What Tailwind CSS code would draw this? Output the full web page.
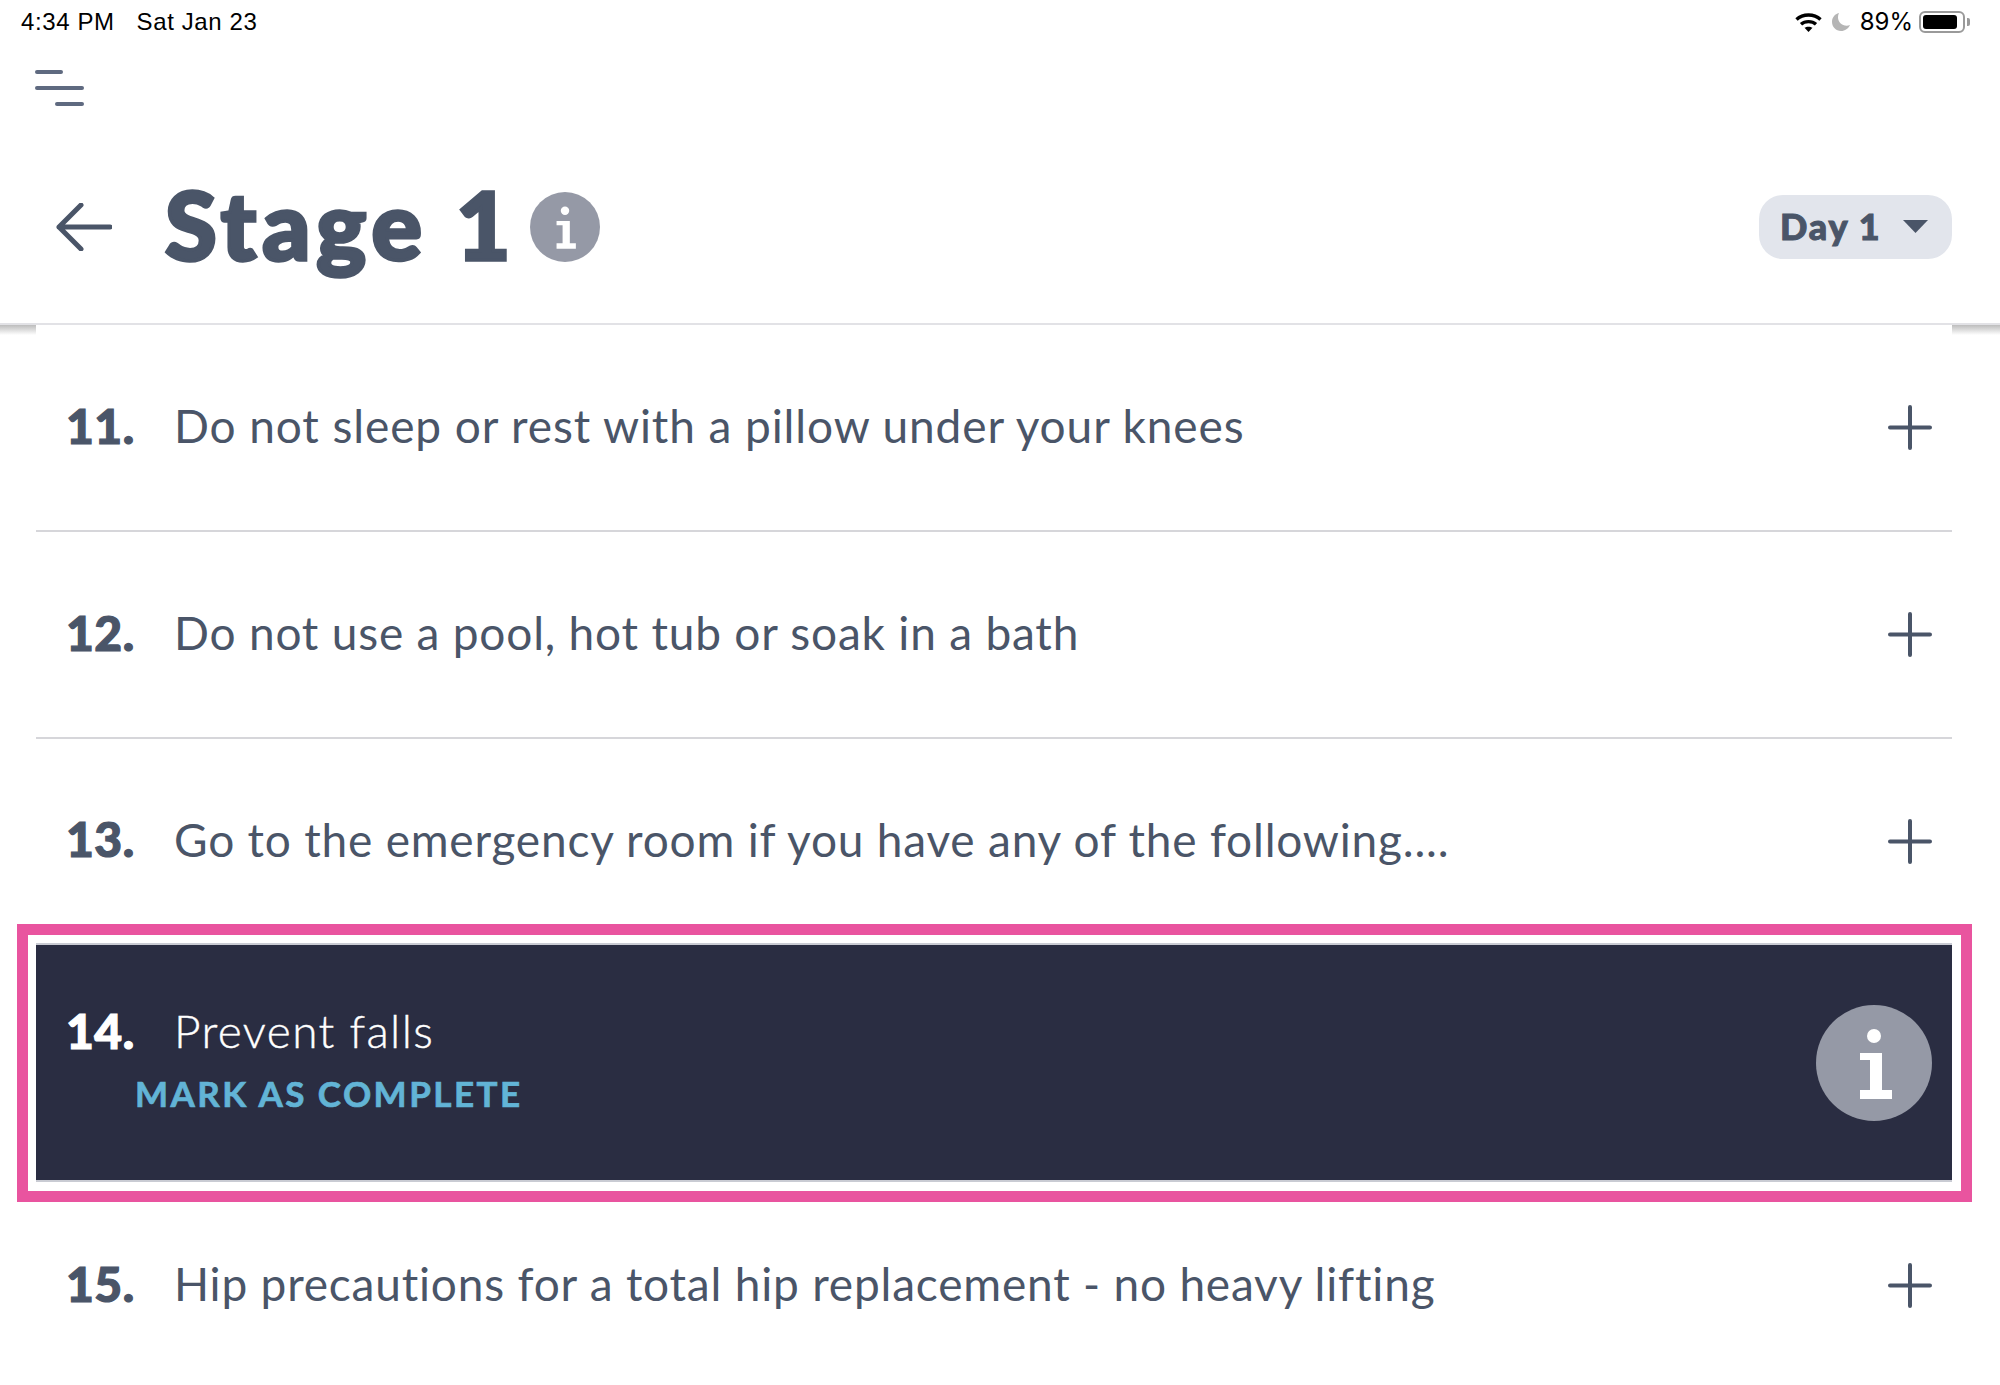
<!DOCTYPE html>
<html><head><meta charset="utf-8"><script src="https://cdn.jsdelivr.net/npm/@tailwindcss/browser@4"></script></head>
<body class="bg-white overflow-hidden">
<div class="w-[2000px] h-[1385px] overflow-hidden font-['Lato',sans-serif] text-[#4a5568] flex flex-col">
  <header class="h-[325px] shrink-0 border-b-2 border-[#e2e2e6] flex flex-col">
    <div class="h-[44px] flex items-center justify-between pl-[21px] pr-[30px] text-black text-[24px] tracking-[0.6px] font-['Liberation_Sans',sans-serif]">
      <div class="flex gap-[22px]"><span>4:34 PM</span><span>Sat Jan 23</span></div>
      <div class="flex items-center">
        <svg class="w-[27px] h-[19px]" viewBox="0 0 27 19" fill="none" stroke="#000" stroke-width="3.4"><path d="M1.5 6.5C8 .4 19 .4 25.5 6.5"/><path d="M6 11.2C10 7.7 17 7.7 21 11.2"/><path d="M13.5 19L9.5 14.8C11.6 13.3 15.4 13.3 17.5 14.8Z" fill="#000" stroke="none"/></svg>
        <svg class="w-[18px] h-[18px] ml-[10px]" viewBox="0 0 18 18" fill="#b5b5b5"><path d="M7 0C2.8 1 0 4.6 0 8.8 0 14 4 18 9 18c4 0 7.400-2.400 9-6-1 .5-2.200.7-3.300.7C9.700 12.700 6 9 6 4.200 6 2.700 6.300 1.300 7 0Z"/></svg>
        <span class="ml-[10px] text-[24px] tracking-normal font-['Inter',sans-serif]">89%</span>
        <div class="ml-[6px] w-[46px] h-[22px] rounded-[6px] border-2 border-[#9a9a9a] p-[2px]"><div class="w-[34px] h-full bg-black rounded-[3px]"></div></div>
        <div class="ml-[2px] w-[3px] h-[8px] bg-[#9a9a9a] rounded-r-[2px]"></div>
      </div>
    </div>
    <div class="pl-[35px] pt-[26px] h-[66px] flex flex-col gap-[12px]">
      <div class="w-[28px] h-[4px] bg-[#5f6a80] rounded-full"></div>
      <div class="w-[49px] h-[4px] bg-[#5f6a80] rounded-full"></div>
      <div class="w-[29px] h-[4px] bg-[#5f6a80] rounded-full ml-[20px]"></div>
    </div>
    <div class="flex items-center pl-[56px] pr-[48px] mt-[64px]">
      <svg class="w-[56px] h-[48px]" viewBox="0 0 56 48" fill="none" stroke="#4a5568" stroke-width="5" stroke-linecap="round" stroke-linejoin="round"><path d="M54 24H3M25 2L3 24l22 22"/></svg>
      <h1 class="ml-[53px] text-[94px] leading-[100px] font-black tracking-[6px] pb-[5px] [-webkit-text-stroke:3.5px_#4a5568]">Stage 1</h1>
      <svg class="ml-[13px] w-[70px] h-[70px]" viewBox="0 0 116 116"><circle cx="58" cy="58" r="58" fill="#9599a6"/><circle cx="58" cy="31" r="7" fill="#fff"/><path d="M44 48h22v37h10v9H44v-9h10V55H44Z" fill="#fff"/></svg>
      <div class="ml-auto w-[193px] h-[64px] rounded-[24px] bg-[#e2e5ec] flex items-center pl-[21px] text-[36px] font-black tracking-[1.8px] [-webkit-text-stroke:1px_#4a5568]">
        <span class="pb-[2px]">Day 1</span>
        <svg class="ml-auto mr-[24px] w-[25px] h-[13px]" viewBox="0 0 25 13" fill="#4a5568"><path d="M0 0h25L12.500 13Z"/></svg>
      </div>
    </div>
  </header>
  <div class="relative h-0 flex justify-between">
    <div class="w-[36px] h-[10px] bg-gradient-to-b from-[#bdbdbd] to-white"></div>
    <div class="w-[48px] h-[10px] bg-gradient-to-b from-[#bdbdbd] to-white"></div>
  </div>
  <main class="pl-[36px] pr-[48px] flex flex-col">
    <div class="h-[207px] border-b-2 border-[#d6d6da] flex items-center pl-[30px] pr-[20px]">
      <span class="w-[108px] text-[48px] tracking-[0.5px] font-black pb-[4px] [-webkit-text-stroke:1.2px_#4a5568]">11.</span>
      <span class="text-[46px] tracking-[0.9px] font-normal pb-[4px]">Do not sleep or rest with a pillow under your knees</span>
      <svg class="ml-auto w-[44px] h-[45px]" viewBox="0 0 44 45" stroke="#4a5568" stroke-width="4" stroke-linecap="round"><path d="M2 22.500H42M22 2V43"/></svg>
    </div>
    <div class="h-[207px] border-b-2 border-[#d6d6da] flex items-center pl-[30px] pr-[20px]">
      <span class="w-[108px] text-[48px] tracking-[0.5px] font-black pb-[4px] [-webkit-text-stroke:1.2px_#4a5568]">12.</span>
      <span class="text-[46px] tracking-[0.8px] font-normal pb-[4px]">Do not use a pool, hot tub or soak in a bath</span>
      <svg class="ml-auto w-[44px] h-[45px]" viewBox="0 0 44 45" stroke="#4a5568" stroke-width="4" stroke-linecap="round"><path d="M2 22.500H42M22 2V43"/></svg>
    </div>
    <div class="h-[185px] pt-[19px] flex items-center pl-[30px] pr-[20px]">
      <span class="w-[108px] text-[48px] tracking-[0.5px] font-black pb-[4px] [-webkit-text-stroke:1.2px_#4a5568]">13.</span>
      <span class="text-[46px] tracking-[0.8px] font-normal pb-[4px]">Go to the emergency room if you have any of the following....</span>
      <svg class="ml-auto w-[44px] h-[45px]" viewBox="0 0 44 45" stroke="#4a5568" stroke-width="4" stroke-linecap="round"><path d="M2 22.500H42M22 2V43"/></svg>
    </div>
    <div class="-ml-[19px] -mr-[20px] border-[11px] border-[#e9549f] pt-[8px] pb-[9px] pl-[8px] pr-[9px]">
      <div class="h-[239px] border-y-2 border-[#c9cbd3] bg-[#2a2d42] flex items-center pl-[30px] pr-[20px] text-white">
        <div class="flex flex-col pb-[10px]">
          <div class="flex items-center"><span class="w-[108px] text-[48px] tracking-[0.5px] font-black leading-[56px] [-webkit-text-stroke:1.2px_#fff]">14.</span><span class="text-[46px] tracking-[1.4px] font-light leading-[56px] [-webkit-text-stroke:0.4px_#fff]">Prevent falls</span></div>
          <div class="ml-[69px] mt-[14px] text-[35px] leading-[40px] font-bold tracking-[2.45px] text-[#62b4d6] [-webkit-text-stroke:0.7px_#62b4d6]">MARK AS COMPLETE</div>
        </div>
        <svg class="ml-auto w-[116px] h-[116px]" viewBox="0 0 116 116"><circle cx="58" cy="58" r="58" fill="#9599a6"/><circle cx="58" cy="31" r="7" fill="#fff"/><path d="M44 48h22v37h10v9H44v-9h10V55H44Z" fill="#fff"/></svg>
      </div>
    </div>
    <div class="h-[184px] pb-[17px] flex items-center pl-[30px] pr-[20px]">
      <span class="w-[108px] text-[48px] tracking-[0.5px] font-black pb-[4px] [-webkit-text-stroke:1.2px_#4a5568]">15.</span>
      <span class="text-[46px] tracking-[0.8px] font-normal pb-[4px]">Hip precautions for a total hip replacement - no heavy lifting</span>
      <svg class="ml-auto w-[44px] h-[45px]" viewBox="0 0 44 45" stroke="#4a5568" stroke-width="4" stroke-linecap="round"><path d="M2 22.500H42M22 2V43"/></svg>
    </div>
  </main>
</div>
</body></html>
